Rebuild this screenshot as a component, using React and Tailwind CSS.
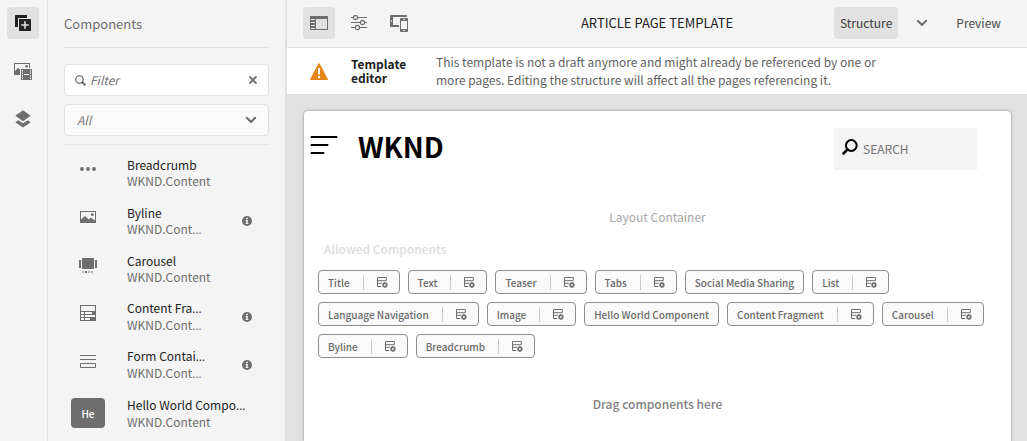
import React from "react";

const AddIcon = () => (
  <svg width="16" height="16" viewBox="0 0 16 16" fill="#222">
    <path d="M0 .6Q0 0 .6 0H12v3H3v9H.6Q0 12 0 11.400z" />
    <path fillRule="evenodd" d="M4.600 4h10.800q.6 0 .6.6v10.800q0 .6-.6.6H4.600q-.6 0-.6-.6V4.600q0-.6.6-.6zM9.200 6.200v3h-3v1.600h3v3h1.600v-3h3V9.200h-3v-3z" />
  </svg>
);

const AssetsIcon = () => (
  <svg width="18" height="17" viewBox="0 0 18 17" fill="#6e6e6e">
    <path d="M0 0h16v5h-1V1H1v7l3-3 2 1.500V12H0z" />
    <circle cx="12.500" cy="3.300" r="1.300" />
    <path fillRule="evenodd" d="M7 6h11v11H7zM8 7v1.500h1V7zM8 9.500V11h1V9.500zM8 12v1.500h1V12zM8 14.500V16h1v-1.500zM16 7v1.500h1V7zM16 9.500V11h1V9.500zM16 12v1.500h1V12zM16 14.500V16h1v-1.500zM10 11v1h5v-1z" />
  </svg>
);

const LayersIcon = () => (
  <svg width="16" height="18" viewBox="0 0 16 18" fill="#6e6e6e">
    <path d="M8 .3 15.700 5.700 8 11.200.3 5.700z" />
    <path d="M3.300 10.200 8 13.300l4.700-3.100 3 2L8 17.500.3 12.200z" />
  </svg>
);

const SidePanelIcon = () => (
  <svg width="18" height="14" viewBox="0 0 18 14" fill="#6e6e6e">
    <path fillRule="evenodd" d="M.5 0h17q.5 0 .5.5v13q0 .5-.5.5H.5Q0 14 0 13.500V.5Q0 0 .5 0zM6 3v10h11V3zM1 3v1h4V3zM1 6v1h4V6zM1 9v1h4V9zM1 12v1h4v-1z" />
  </svg>
);

const SlidersIcon = () => (
  <svg width="16" height="16" viewBox="0 0 16 16" fill="none" stroke="#6e6e6e" strokeWidth="1.200">
    <path d="M0 2.500h2.200M6.800 2.500H16M0 7.500h9.200M13.800 7.500H16M0 12.500h4.200M8.800 12.500H16" />
    <circle cx="4.500" cy="2.500" r="2.100" />
    <circle cx="11.500" cy="7.500" r="2.100" />
    <circle cx="6.500" cy="12.500" r="2.100" />
  </svg>
);

const DevicesIcon = () => (
  <svg width="18" height="17" viewBox="0 0 18 17" fill="#6e6e6e">
    <path fillRule="evenodd" d="M.8 0h15.400q.8 0 .8.8V2H3v8h6v2H.8Q0 12 0 11.200V.8Q0 0 .8 0zM1 5.200v1.600h1V5.200z" />
    <path fillRule="evenodd" d="M11 3h6q1 0 1 1v12q0 1-1 1h-6q-1 0-1-1V4q0-1 1-1zM11 6v8h6V6zM13 4.300v.7h2v-.7zM14 14.800a.7.7 0 1 0 .01 0z" />
  </svg>
);

const WarningIcon = () => (
  <svg width="18" height="17" viewBox="0 0 18 17">
    <path d="M8.400.6a.7.7 0 0 1 1.200 0l8.200 15.300a.7.7 0 0 1-.6 1.100H.8a.7.7 0 0 1-.6-1.100z" fill="#e68619" />
    <path d="M8 5h2v6.500H8zM8 13h2v2H8z" fill="#fff" />
  </svg>
);

const Chevron = ({ className = "" }) => (
  <svg className={className} width="12" height="8" viewBox="0 0 12 8" fill="none" stroke="#6e6e6e" strokeWidth="2" strokeLinecap="round" strokeLinejoin="round">
    <path d="M1.800 1.800 6 6l4.200-4.200" />
  </svg>
);

const InfoIcon = () => (
  <svg width="10" height="10" viewBox="0 0 10 10">
    <circle cx="5" cy="5" r="5" fill="#6e6e6e" />
    <path d="M4.200 1.700h1.600v1.500H4.200zM3.700 4.100h2.100v2.900h.6v.9H3.700V7h.6V5h-.6z" fill="#f4f4f4" />
  </svg>
);

const TagIcon = () => (
  <svg width="11" height="11" viewBox="0 0 11 11">
    <path d="M.5 9.500V.5h8.800v3.200H.5M.5 6.300h4.300M.5 9.500h3.700" fill="none" stroke="#6e6e6e" />
    <path d="M7.900 4.900v6.100M4.900 8H11M5.700 5.800l4.400 4.400M10.100 5.800l-4.400 4.400" stroke="#6e6e6e" strokeWidth="1.100" />
    <circle cx="7.900" cy="8" r="2.400" fill="#6e6e6e" />
    <circle cx="7.900" cy="8" r=".9" fill="#fafafa" />
  </svg>
);

const DotsIcon = () => (
  <svg width="16" height="4" viewBox="0 0 16 4" fill="#6e6e6e">
    <circle cx="2" cy="2" r="1.900" />
    <circle cx="8" cy="2" r="1.900" />
    <circle cx="14" cy="2" r="1.900" />
  </svg>
);

const ImageIcon = () => (
  <svg width="16" height="12" viewBox="0 0 16 12" fill="#6e6e6e">
    <path fillRule="evenodd" d="M0 0h16v12H0zM1 1v7.500L5 5l3.500 3.300L11 6.800l4 2.700V1z" />
    <circle cx="12.300" cy="3.600" r="1.400" />
  </svg>
);

const CarouselIcon = () => (
  <svg width="18" height="15" viewBox="0 0 18 15" fill="#6e6e6e">
    <path d="M3 0h12v11H3zM0 2h2v8H0zM16 2h2v8h-2zM6 13h2v2H6z" />
    <path d="M3 13h2v2H3zM9 13h2v2H9zM12 13h2v2h-2z" opacity=".5" />
  </svg>
);

const FragmentIcon = () => (
  <svg width="16" height="16" viewBox="0 0 16 16" fill="#6e6e6e">
    <path fillRule="evenodd" d="M0 0h16v16H0zM1 1v5h14V1zM1 7v2h3V7zM5 7v2h7V7zM1 10v2h3v-2zM5 10v2h10v-2zM1 13v2h3v-2zM5 13v2h5v-2z" />
  </svg>
);

const FormIcon = () => (
  <svg width="16" height="13" viewBox="0 0 16 13" fill="none" stroke="#6e6e6e">
    <path d="M0 .5h16M0 4.500h16M.5 8.500h15v4H.5z" />
  </svg>
);

const components = [
  { name: "Breadcrumb", group: "WKND.Content", icon: DotsIcon },
  { name: "Byline", group: "WKND.Cont", groupCut: true, icon: ImageIcon, info: true },
  { name: "Carousel", group: "WKND.Content", icon: CarouselIcon },
  { name: "Content Fra", nameCut: true, group: "WKND.Cont", groupCut: true, icon: FragmentIcon, info: true },
  { name: "Form Contai", nameCut: true, group: "WKND.Cont", groupCut: true, icon: FormIcon, info: true },
  { name: "Hello World Compo", nameCut: true, group: "WKND.Content", initials: "He" },
];

const allowed = [
  ["Title", true],
  ["Text", true],
  ["Teaser", true],
  ["Tabs", true],
  ["Social Media Sharing", false],
  ["List", true],
  ["Language Navigation", true],
  ["Image", true],
  ["Hello World Component", false],
  ["Content Fragment", true],
  ["Carousel", true],
  ["Byline", true],
  ["Breadcrumb", true],
];

const Ellipsis = () => <span className="font-['Open_Sans']">…</span>;

function IconButton({ label, active, children }) {
  return (
    <button
      type="button"
      aria-label={label}
      className={
        active
          ? "flex size-8 items-center justify-center rounded bg-[#e1e1e1]"
          : "flex size-8 items-center justify-center rounded"
      }
    >
      {children}
    </button>
  );
}

function ComponentRow({ item }) {
  const Icon = item.icon;
  return (
    <li className="flex h-12 items-center pr-[17px] pl-[7px]">
      {item.initials ? (
        <span className="flex h-[30px] w-[34px] shrink-0 items-center justify-center rounded bg-[#6e6e6e] text-[10px] font-medium text-white">
          {item.initials}
        </span>
      ) : (
        <span className="flex h-8 w-[34px] shrink-0 justify-center">
          <span className="flex h-6 items-center">
            <Icon />
          </span>
        </span>
      )}
      <div className="ml-[22px] min-w-0 flex-1 leading-4 whitespace-nowrap">
        <div className="text-[#222]">
          {item.name}
          {item.nameCut && <Ellipsis />}
        </div>
        <div className="text-[#6e6e6e]">
          {item.group}
          {item.groupCut && <Ellipsis />}
        </div>
      </div>
      {item.info && (
        <button type="button" aria-label={"About " + item.name}>
          <InfoIcon />
        </button>
      )}
    </li>
  );
}

function SidePanel() {
  return (
    <aside className="w-[239px] shrink-0 border-r-2 border-[#e1e1e1] px-4">
      <h2 className="flex h-12 items-center border-b border-[#e1e1e1] text-[13px] text-[#6e6e6e]">Components</h2>
      <div className="mt-4 flex h-8 items-center rounded border border-[#e1e1e1] bg-white px-[10px]">
        <svg className="shrink-0" width="11" height="11" viewBox="0 0 11 11" fill="none" stroke="#4b4b4b" strokeWidth="1.100">
          <circle cx="4.500" cy="4.500" r="3.700" />
          <path d="m7.200 7.200 3.200 3.200" strokeWidth="1.500" />
        </svg>
        <input
          type="text"
          aria-label="Filter"
          placeholder="Filter"
          className="ml-1 min-w-0 flex-1 italic outline-none placeholder:text-[#757575]"
        />
        <button type="button" aria-label="Clear filter">
          <svg width="10" height="10" viewBox="0 0 10 10" stroke="#6e6e6e" strokeWidth="1.800">
            <path d="m1.500 1.500 7 7M8.500 1.500l-7 7" />
          </svg>
        </button>
      </div>
      <div className="mt-2 grid h-8 items-center rounded border border-[#e1e1e1] bg-[#fafafa]">
        <select aria-label="Group" className="col-start-1 row-start-1 h-full w-full appearance-none px-3 text-[#757575] italic outline-none">
          <option>All</option>
        </select>
        <Chevron className="pointer-events-none col-start-1 row-start-1 mr-[11px] justify-self-end" />
      </div>
      <ul className="mt-2 border-t border-[#e8e8e8] pt-1">
        {components.map((item) => (
          <ComponentRow key={item.name} item={item} />
        ))}
      </ul>
    </aside>
  );
}

function Tag({ label, policy }) {
  return (
    <li className="flex h-6 items-center rounded border border-[#8e8e8e] bg-[#fafafa] px-[9px] text-[10px] font-medium text-[#6a6a6a]">
      {label}
      {policy && (
        <>
          <span className="mr-[13px] ml-[13px] h-[15px] w-px bg-[#cacaca]" />
          <button type="button" aria-label={label + " policy"} className="mr-[2px]">
            <TagIcon />
          </button>
        </>
      )}
    </li>
  );
}

export default function App() {
  return (
    <div className="flex min-h-screen bg-[#f4f4f4] font-['Noto_Sans_CJK_SC',sans-serif] text-[12px]">
      <nav className="flex w-12 shrink-0 flex-col items-center gap-4 border-r border-[#e1e1e1] pt-[7px] pr-px">
        <IconButton label="Components" active>
          <AddIcon />
        </IconButton>
        <IconButton label="Assets">
          <AssetsIcon />
        </IconButton>
        <IconButton label="Content tree">
          <LayersIcon />
        </IconButton>
      </nav>
      <SidePanel />
      <div className="flex min-w-0 flex-1 flex-col">
        <header className="grid h-12 grid-cols-[1fr_auto_1fr] items-center border-b border-[#e1e1e1] px-4 pb-px">
          <div className="flex gap-2">
            <IconButton label="Toggle side panel" active>
              <SidePanelIcon />
            </IconButton>
            <IconButton label="Page information">
              <SlidersIcon />
            </IconButton>
            <IconButton label="Emulator">
              <DevicesIcon />
            </IconButton>
          </div>
          <h1 className="text-[13px] text-[#222]">ARTICLE PAGE TEMPLATE</h1>
          <div className="flex items-center justify-end">
            <button type="button" className="h-8 rounded bg-[#e1e1e1] px-[6px] text-[#3c3c3c]">Structure</button>
            <button type="button" aria-label="Choose mode" className="ml-2 flex size-8 items-center justify-center">
              <Chevron />
            </button>
            <button type="button" className="ml-2 h-8 px-[10px] text-[#4b4b4b]">Preview</button>
          </div>
        </header>
        <section className="flex items-center bg-white py-[5px] pl-[23px]">
          <WarningIcon />
          <h2 className="ml-[23px] w-[85px] shrink-0 pr-4 leading-[14px] font-bold text-[#222]">Template editor</h2>
          <p className="max-w-[458px] leading-[18px] text-[#5f5f5f]">
            This template is not a draft anymore and might already be referenced by one or more pages. Editing the structure will affect all the pages referencing it.
          </p>
        </section>
        <main className="flex flex-1 flex-col bg-[#e1e1e1] pt-[17px] pr-4 pl-[17px]">
          <div className="flex-1 rounded-t bg-white pt-[17px] shadow-[0_0_3px_rgba(0,0,0,0.4)]">
            <div className="flex items-start pr-[34px] pl-[6px]">
              <button type="button" aria-label="Menu" className="mt-2">
                <svg width="28" height="19" viewBox="0 0 28 19" stroke="#000" strokeWidth="2" strokeLinecap="round">
                  <path d="M1.500 1h25M1.500 9h16M1.500 17h12" />
                </svg>
              </button>
              <span className="ml-5 text-[28px] leading-9 font-bold text-black">WKND</span>
              <label className="ml-auto flex h-[42px] w-[143px] items-center bg-[#f3f3f3] pl-2">
                <svg className="mb-1" width="16" height="16" viewBox="0 0 16 16" fill="none" stroke="#000" strokeLinecap="round">
                  <circle cx="9.300" cy="6.500" r="5.400" strokeWidth="2" />
                  <path d="M5.300 10.700 1.500 14.500" strokeWidth="2.600" />
                </svg>
                <input type="text" aria-label="Search" placeholder="SEARCH" className="ml-[5px] w-24 outline-none placeholder:text-[#757575]" />
              </label>
            </div>
            <p className="mt-[38px] text-center leading-[18px] text-[#a6a6a6]">Layout Container</p>
            <h3 className="mt-[14px] pl-5 leading-[18px] font-medium text-[#dcdcdc]">Allowed Components</h3>
            <ul className="mt-3 flex flex-wrap gap-2 pr-[14px] pl-[14px]">
              {allowed.map(([label, policy]) => (
                <Tag key={label} label={label} policy={policy} />
              ))}
            </ul>
            <p className="mt-[37px] text-center leading-[18px] font-medium text-[#808080]">Drag components here</p>
          </div>
        </main>
      </div>
    </div>
  );
}
